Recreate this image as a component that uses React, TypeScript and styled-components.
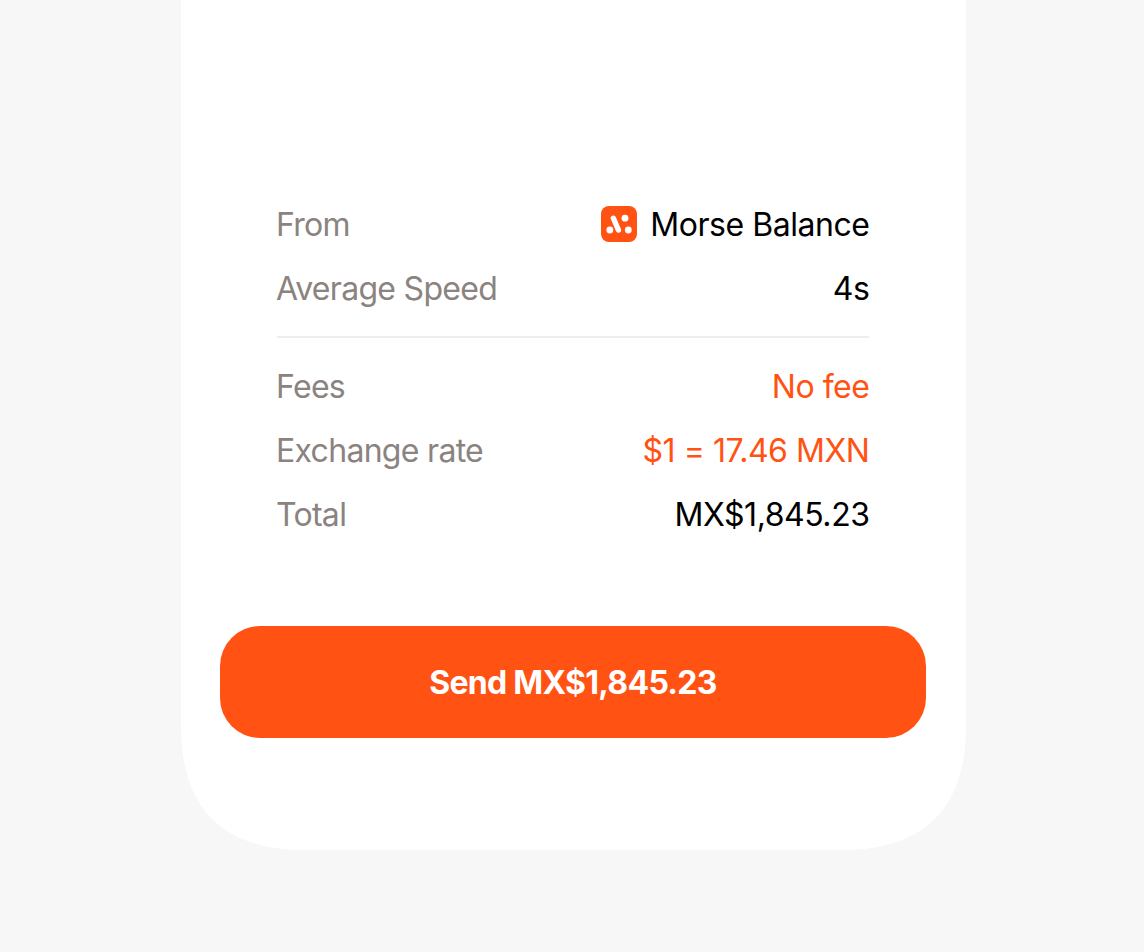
import React from 'react'
import styled, { createGlobalStyle } from 'styled-components'

const GlobalStyle = createGlobalStyle`
  html, body {
    margin: 0;
    height: 100%;
    background: #f7f7f7;
    font-family: Inter, "Liberation Sans", sans-serif;
  }
`

const Page = styled.div`
  width: 1144px;
  height: 952px;
  overflow: hidden;
  background: #f7f7f7;
  padding-left: 181px;
  box-sizing: border-box;
`

const Card = styled.main`
  width: 785px;
  height: 850px;
  box-sizing: border-box;
  padding: 193px 40px 0 39px;
  background: #fff;
  /* smooth corners, a plain border-radius comes out too round */
  clip-path: path('M0 0 H785 V725 C785 809 744 850 660 850 H125 C41 850 0 809 0 725 Z');
`

const Details = styled.section`
  padding: 0 57px;
  margin-bottom: 79px;
`

const Row = styled.div`
  height: 64px;
  box-sizing: border-box;
  padding-bottom: 2px;
  display: flex;
  align-items: center;
  justify-content: space-between;
  font-size: 32px;
`

const Label = styled.span`
  color: #8a8380;
  font-weight: 400;
  letter-spacing: -0.7px;
  margin-left: -1px;
`

const Value = styled.span<{ $accent?: boolean }>`
  display: inline-flex;
  align-items: center;
  gap: 14px;
  color: ${({ $accent }) => ($accent ? '#ff5213' : '#000')};
  font-weight: 400;
  letter-spacing: -0.46px;
  margin-right: -0.5px;
`

const Divider = styled.hr`
  border: 0;
  height: 2px;
  margin: 15px 0 17px;
  background: #eeeeee;
`

const SendButton = styled.button`
  display: block;
  width: 706px;
  height: 112px;
  padding: 0;
  border: 0;
  border-radius: 40px;
  background: #ff5213;
  color: #fff;
  font-family: inherit;
  font-size: 32px;
  font-weight: 700;
  letter-spacing: -0.72px;
`

function MorseLogo() {
  return (
    <svg width="36" height="36" viewBox="0 0 36 36" aria-hidden="true" style={{ marginRight: -1 }}>
      <rect width="36" height="36" rx="8" fill="#ff5213" />
      <path d="M12.4 12.2 L17.4 24" stroke="#fff" strokeWidth="5.4" strokeLinecap="round" />
      <circle cx="24" cy="12.2" r="3.4" fill="#fff" />
      <circle cx="8.8" cy="24" r="3.4" fill="#fff" />
      <circle cx="27.3" cy="24" r="3.4" fill="#fff" />
    </svg>
  )
}

export default function App() {
  return (
    <Page>
      <GlobalStyle />
      <Card>
        <Details>
          <Row>
            <Label>From</Label>
            <Value>
              <MorseLogo />
              Morse Balance
            </Value>
          </Row>
          <Row>
            <Label>Average Speed</Label>
            <Value>4s</Value>
          </Row>
          <Divider />
          <Row>
            <Label>Fees</Label>
            <Value $accent>No fee</Value>
          </Row>
          <Row>
            <Label>Exchange rate</Label>
            <Value $accent>$1 = 17.46 MXN</Value>
          </Row>
          <Row>
            <Label>Total</Label>
            <Value>MX$1,845.23</Value>
          </Row>
        </Details>
        <SendButton>Send MX$1,845.23</SendButton>
      </Card>
    </Page>
  )
}
